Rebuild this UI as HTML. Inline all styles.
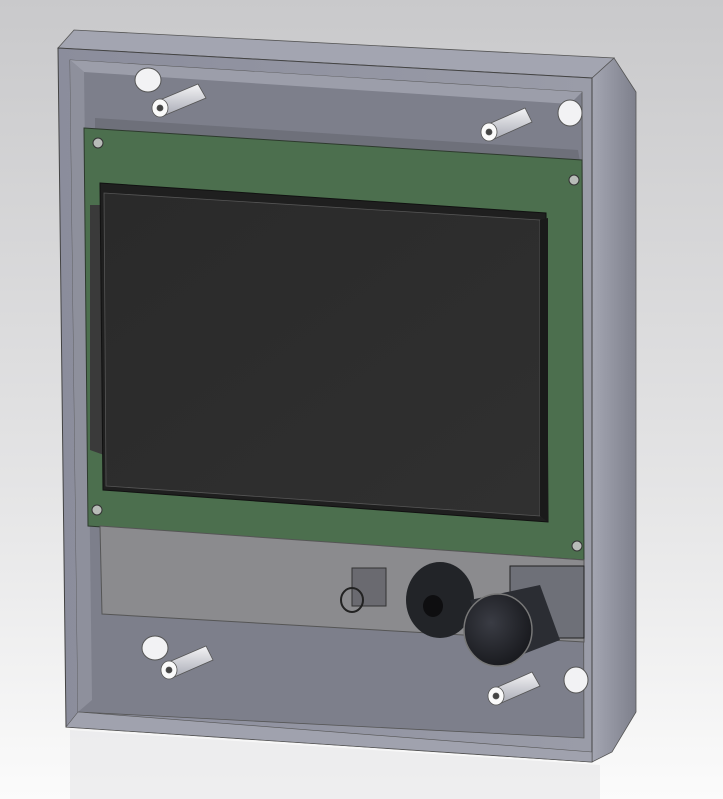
<!DOCTYPE html>
<html><head><meta charset="utf-8"><style>
html,body{margin:0;padding:0;width:723px;height:799px;overflow:hidden;background:#fff}
svg{display:block}
</style></head><body>
<svg width="723" height="799" viewBox="0 0 723 799" xmlns="http://www.w3.org/2000/svg">
<defs>
<linearGradient id="bg" x1="0" y1="0" x2="0" y2="1">
<stop offset="0" stop-color="#c9c9cb"/><stop offset="0.6" stop-color="#e4e4e5"/><stop offset="1" stop-color="#fbfbfb"/>
</linearGradient>
<linearGradient id="frame" x1="0" y1="0" x2="1" y2="0">
<stop offset="0" stop-color="#8b8d9c"/><stop offset="1" stop-color="#9a9ca8"/>
</linearGradient>
<linearGradient id="side" x1="0" y1="0" x2="1" y2="0">
<stop offset="0" stop-color="#a4a6b2"/><stop offset="1" stop-color="#7e808c"/>
</linearGradient>
<linearGradient id="lcd" x1="0" y1="0" x2="1" y2="1">
<stop offset="0" stop-color="#2a2a2a"/><stop offset="1" stop-color="#303030"/>
</linearGradient>
<radialGradient id="knob" cx="0.4" cy="0.4" r="0.7">
<stop offset="0" stop-color="#3a3c44"/><stop offset="1" stop-color="#15161a"/>
</radialGradient>
<linearGradient id="pin" x1="0" y1="0" x2="0" y2="1">
<stop offset="0" stop-color="#f4f4f6"/><stop offset="1" stop-color="#a8aab4"/>
</linearGradient>
</defs>
<rect width="723" height="799" fill="url(#bg)"/>
<!-- reflection -->
<polygon points="70,730 600,765 600,799 70,799" fill="#e8e8ea" opacity="0.7"/>
<!-- right side face -->
<polygon points="592,78 614,58 636,92 636,712 612,752 592,762" fill="url(#side)" stroke="#555" stroke-width="0.8"/>
<!-- top face -->
<polygon points="58,48 74,30 614,58 592,78" fill="#a3a5b1" stroke="#555" stroke-width="0.8"/>
<!-- front frame -->
<polygon points="58,48 592,78 592,762 66,727" fill="url(#frame)" stroke="#444" stroke-width="1"/>
<!-- inner cavity -->
<polygon points="70,60 582,92 584,738 78,712" fill="#7d7f8b" stroke="#555" stroke-width="0.8"/>
<!-- inner wall shading -->
<polygon points="70,60 582,92 570,104 84,72" fill="#9c9eaa"/>
<polygon points="70,60 84,72 92,700 78,712" fill="#8e909c"/>
<!-- holes top -->
<ellipse cx="148" cy="80" rx="13" ry="12" fill="#f2f2f4" stroke="#555"/>
<ellipse cx="570" cy="113" rx="12" ry="13" fill="#f2f2f4" stroke="#555"/>
<ellipse cx="155" cy="648" rx="13" ry="12" fill="#f2f2f4" stroke="#555"/>
<ellipse cx="576" cy="680" rx="12" ry="13" fill="#f2f2f4" stroke="#555"/>
<!-- pcb back strip -->
<polygon points="95,118 578,150 580,162 95,130" fill="#6e707a"/>
<!-- green PCB -->
<polygon points="84,128 582,160 584,560 88,526" fill="#4c6f4e" stroke="#2d3a2d" stroke-width="1"/>
<circle cx="98" cy="143" r="5" fill="#b8bcb8" stroke="#333"/>
<circle cx="574" cy="180" r="5" fill="#b8bcb8" stroke="#333"/>
<circle cx="97" cy="510" r="5" fill="#b8bcb8" stroke="#333"/>
<circle cx="577" cy="546" r="5" fill="#b8bcb8" stroke="#333"/>
<!-- LCD dark left slab -->
<polygon points="90,205 104,205 104,455 90,450" fill="#3a3a3a"/>
<!-- LCD -->
<polygon points="100,183 546,213 548,522 103,490" fill="#1f1f1f" stroke="#111"/>
<polygon points="104,193 540,220 540,516 106,486" fill="url(#lcd)" stroke="#555" stroke-width="0.8"/>
<polygon points="540,220 548,218 548,522 540,516" fill="#1a1a1a"/>
<!-- lower gray board -->
<polygon points="100,526 584,560 584,642 102,614" fill="#8b8b8e" stroke="#555"/>
<!-- button -->
<rect x="352" y="568" width="34" height="38" fill="#6a6a70" stroke="#333"/>
<ellipse cx="352" cy="600" rx="11" ry="12" fill="none" stroke="#222" stroke-width="2"/>
<!-- buzzer -->
<ellipse cx="440" cy="600" rx="34" ry="38" fill="#222428"/>
<ellipse cx="433" cy="606" rx="10" ry="11" fill="#0e0e10"/>
<!-- encoder body -->
<rect x="510" y="566" width="74" height="72" fill="#6e7078" stroke="#222"/>
<!-- knob -->
<path d="M470,600 L540,585 L560,640 L495,665 Z" fill="#2b2d33"/>
<ellipse cx="498" cy="630" rx="34" ry="36" fill="url(#knob)" stroke="#777" stroke-width="1.5"/>
<!-- standoffs -->
<g stroke="#555" stroke-width="0.8">
<polygon points="155,102 198,84 206,98 163,116" fill="url(#pin)"/>
<ellipse cx="160" cy="108" rx="8" ry="9" fill="#fafafa"/><circle cx="160" cy="108" r="3" fill="#444"/>
<polygon points="484,126 525,108 532,122 492,140" fill="url(#pin)"/>
<ellipse cx="489" cy="132" rx="8" ry="9" fill="#fafafa"/><circle cx="489" cy="132" r="3" fill="#444"/>
<polygon points="164,664 206,646 213,660 172,678" fill="url(#pin)"/>
<ellipse cx="169" cy="670" rx="8" ry="9" fill="#fafafa"/><circle cx="169" cy="670" r="3" fill="#444"/>
<polygon points="491,690 532,672 540,686 499,704" fill="url(#pin)"/>
<ellipse cx="496" cy="696" rx="8" ry="9" fill="#fafafa"/><circle cx="496" cy="696" r="3" fill="#444"/>
</g>
<!-- bottom lip -->
<polygon points="66,727 592,762 592,752 78,712" fill="#a0a2ae" stroke="#555" stroke-width="0.6"/>
</svg>
</body></html>
